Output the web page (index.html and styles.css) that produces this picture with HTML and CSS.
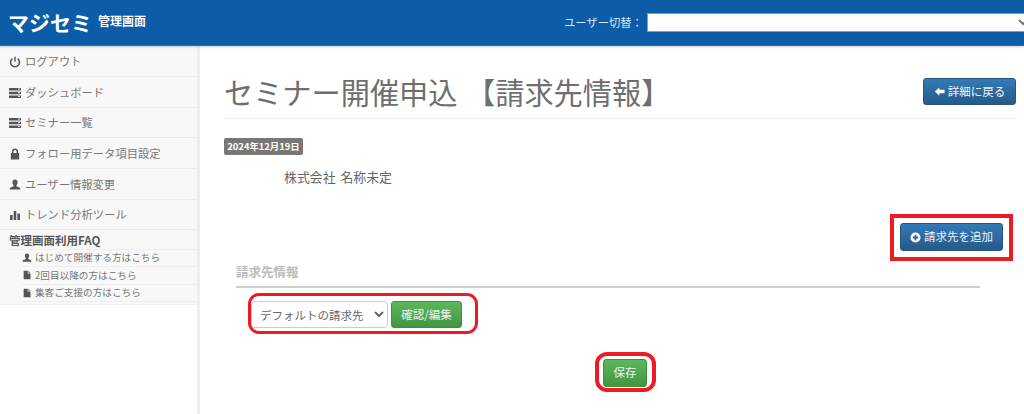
FILE: index.html
```html
<!DOCTYPE html>
<html lang="ja">
<head>
<meta charset="utf-8">
<title>セミナー開催申込</title>
<link rel="stylesheet" href="styles.css">
</head>
<body>
<svg class="sprite" width="0" height="0" aria-hidden="true">
  <symbol id="i-power" viewBox="0 0 12 12"><path d="M3.4 2.600a4.500 4.500 0 1 0 5.200 0" fill="none" stroke="currentColor" stroke-width="1.500"/><path d="M6 .8v4.800" fill="none" stroke="currentColor" stroke-width="1.500"/></symbol>
  <symbol id="i-server" viewBox="0 0 12 12"><path d="M0 1h12v2.600H0zM0 4.700h12v2.600H0zM0 8.400h12V11H0z" fill="currentColor"/><path d="M9 2h2M9 5.700h2M9 9.400h2" stroke="#fff" stroke-width=".9"/></symbol>
  <symbol id="i-lock" viewBox="0 0 12 12"><path d="M3 5V3.600a3 3 0 0 1 6 0V5h1.200v6.400H1.800V5zm1.500 0h3V3.600a1.500 1.500 0 0 0-3 0z" fill="currentColor" fill-rule="evenodd"/></symbol>
  <symbol id="i-user" viewBox="0 0 12 12"><path d="M6 .6c1.700 0 2.600 1.200 2.600 2.800 0 1.200-.5 2.200-1.200 2.800v1c1.700.6 3.600 1.200 3.900 2.200v1.200H.7v-1.200c.3-1 2.200-1.600 3.900-2.200v-1C3.900 5.600 3.400 4.600 3.400 3.400 3.400 1.800 4.300.6 6 .6z" fill="currentColor"/></symbol>
  <symbol id="i-stats" viewBox="0 0 12 12"><path d="M1 6h2.600v5H1zM4.700 2h2.600v9H4.700zM8.400 4.500H11V11H8.400z" fill="currentColor"/></symbol>
  <symbol id="i-file" viewBox="0 0 12 12"><path d="M2 .8h4.800v3.400h3.400v7H2zM7.700.8l2.500 2.500H7.700z" fill="currentColor"/></symbol>
  <symbol id="i-back" viewBox="0 0 12 12"><path d="M5.800 1.500 1 6l4.800 4.500V7.800H11.500V4.200H5.800z" fill="currentColor"/></symbol>
  <symbol id="i-plus" viewBox="0 0 12 12"><path d="M6 .5a5.500 5.500 0 1 1 0 11 5.500 5.500 0 0 1 0-11zM5 3v2H3v2h2v2h2V7h2V5H7V3z" fill="currentColor" fill-rule="evenodd"/></symbol>
</svg>

<header class="topbar">
  <div class="brand">
    <span class="brand-name">マジセミ</span>
    <span class="brand-sub">管理画面</span>
  </div>
  <div class="switcher">
    <label class="switcher-label" for="user-switch">ユーザー切替：</label>
    <select class="switcher-select" id="user-switch"><option></option></select>
  </div>
</header>

<div class="layout">
  <nav class="sidebar">
    <div class="side-panel">
      <a class="nav-item h31"><svg class="ico"><use href="#i-power"/></svg>ログアウト</a>
      <a class="nav-item h31"><svg class="ico"><use href="#i-server"/></svg>ダッシュボード</a>
      <a class="nav-item h30"><svg class="ico"><use href="#i-server"/></svg>セミナー一覧</a>
      <a class="nav-item h31"><svg class="ico"><use href="#i-lock"/></svg>フォロー用データ項目設定</a>
      <a class="nav-item h31"><svg class="ico"><use href="#i-user"/></svg>ユーザー情報変更</a>
      <a class="nav-item h30"><svg class="ico"><use href="#i-stats"/></svg>トレンド分析ツール</a>
      <div class="faq-title">管理画面利用FAQ</div>
      <a class="faq-item"><svg class="ico-sm"><use href="#i-user"/></svg>はじめて開催する方はこちら</a>
      <a class="faq-item"><svg class="ico-sm"><use href="#i-file"/></svg>2回目以降の方はこちら</a>
      <a class="faq-item"><svg class="ico-sm"><use href="#i-file"/></svg>集客ご支援の方はこちら</a>
    </div>
  </nav>

  <main class="content">
    <div class="page-head">
      <h1 class="page-title">セミナー開催申込 【請求先情報】</h1>
      <a class="btn btn-blue btn-back"><svg class="ico-btn"><use href="#i-back"/></svg>詳細に戻る</a>
    </div>
    <span class="date-label">2024年12月19日</span>
    <p class="company">株式会社 名称未定</p>
    <div class="add-row">
      <a class="btn btn-blue btn-add"><svg class="ico-btn"><use href="#i-plus"/></svg>請求先を追加</a>
    </div>
    <section class="billing">
      <h2 class="billing-title">請求先情報</h2>
      <div class="billing-row">
        <select class="billing-select"><option>デフォルトの請求先</option></select>
        <a class="btn btn-green btn-edit">確認/編集</a>
      </div>
      <div class="save-row">
        <a class="btn btn-green btn-save">保存</a>
      </div>
    </section>
  </main>
</div>

<div class="mark mark-add"></div>
<div class="mark mark-row"></div>
<div class="mark mark-save"></div>
</body>
</html>
```
FILE: styles.css
```css
* { box-sizing: border-box; }
html, body { margin: 0; padding: 0; height: 414px; overflow: hidden; background: #fff; }
body { font-family: "Noto Sans CJK JP", "Liberation Sans", sans-serif; color: #555; position: relative; }
.sprite { position: absolute; }

.topbar {
  height: 46px;
  background: #0d5ca8;
  border-bottom: 1px solid #2a6bab;
  box-shadow: 0 1px 2px rgba(0,0,0,.2);
  display: flex;
  align-items: center;
  justify-content: space-between;
  color: #fff;
  position: relative;
  overflow: hidden;
}
.brand { display: flex; align-items: center; padding-left: 8px; }
.brand-name { font-size: 21px; font-weight: 700; line-height: 1; }
.brand-sub { font-size: 12px; font-weight: 700; margin-left: 6px; line-height: 1; position: relative; top: -2px; }
.switcher { display: flex; align-items: center; margin-right: -8px; }
.switcher-label { font-size: 11.300px; color: #d8e4f0; width: 83px; line-height: 1; white-space: nowrap; }
.switcher-select {
  width: 385px; height: 19px; padding: 0; border: 1px solid #8a9bb0;
  background: #fff; font-size: 12px; font-family: inherit; border-radius: 0; color: #777;
}

.layout { display: flex; height: 368px; }
.sidebar { width: 200px; flex: none; border-right: 3px solid #eee; background: #fff; }
.side-panel { background: #f8f8f8; padding-bottom: 2px; border-bottom: 1px solid #eee; }
.nav-item {
  display: flex; align-items: center;
  padding: 1px 0 0 9px;
  font-size: 11.300px; color: #777; line-height: 1;
  border-bottom: 1px solid #ececec;
  white-space: nowrap;
}
.h31 { height: 31px; }
.h30 { height: 30px; }
.ico { width: 12px; height: 12px; margin-right: 4px; color: #555; flex: none; }
.faq-title {
  height: 20px; margin-left: 9px;
  font-size: 11.500px; font-weight: 700; color: #555;
  display: flex; align-items: center;
  border-bottom: 1px solid #eee;
}
.faq-item {
  display: flex; align-items: center;
  height: 17.300px; margin-left: 22px;
  font-size: 9.650px; color: #777; line-height: 1;
  border-bottom: 1px solid #eee;
  white-space: nowrap;
}
.ico-sm { width: 10px; height: 10px; margin-right: 3px; color: #555; flex: none; }

.content { flex: 1; min-width: 0; padding: 0 8px 0 24px; }
.page-head {
  height: 73px;
  display: flex; align-items: center; justify-content: space-between;
  border-bottom: 1px solid #eee;
  padding-top: 19px;
}
.page-title { margin: 0; font-size: 29.200px; font-weight: 400; color: #6e6e6e; line-height: 1; white-space: nowrap; word-spacing: 2px; }
.btn {
  display: inline-flex; align-items: center; justify-content: center;
  border-radius: 3px; font-size: 11.500px; color: #eef3f8; line-height: 1; white-space: nowrap;
}
.btn-blue { background: linear-gradient(#337ab7, #265a88); border: 1px solid #245580; }
.btn-green { background: linear-gradient(#5cb85c, #419641); border: 1px solid #3e8f3e; }
.ico-btn { width: 11px; height: 11px; margin-right: 3px; flex: none; color: #fff; }
.btn-back { width: 93px; height: 27px; }
.date-label {
  display: block; width: 79px; height: 17px; margin-top: 19px;
  background: #777; color: #fff; border-radius: 2px;
  font-size: 9.400px; font-weight: 700; line-height: 17px; text-align: center; white-space: nowrap;
}
.company { margin: 13px 0 0 60px; font-size: 12.900px; line-height: 18px; color: #666; word-spacing: 2px; }
.add-row { display: flex; justify-content: flex-end; margin-top: 37px; padding-right: 13px; }
.btn-add { width: 103px; height: 28px; }
.billing { margin-left: 12px; margin-right: 36px; }
.billing-title {
  margin: 12px 0 0; height: 25px;
  font-size: 12.500px; font-weight: 700; color: #bbb; line-height: 18px;
  border-bottom: 2px solid #ccc;
}
.billing-row { display: flex; align-items: center; margin: 13px 0 0 15px; gap: 3px; }
.billing-select {
  width: 137px; height: 27px; padding: 0 4px;
  background: #fff; border: 1px solid #ccc; border-radius: 4px;
  font-size: 11.500px; font-family: inherit; color: #666;
}
.btn-edit { width: 71px; height: 27px; }
.save-row { display: flex; justify-content: center; margin-top: 31px; padding-left: 34px; }
.btn-save { width: 44px; height: 28px; }

.mark { position: absolute; border: 4px solid #ed1c24; }
.mark-add { left: 890px; top: 214px; width: 123px; height: 47px; }
.mark-row { left: 248px; top: 293px; width: 230px; height: 41px; border-radius: 11px; border-width: 3px; }
.mark-save { left: 595px; top: 352px; width: 61px; height: 40px; border-radius: 12px; }
```
